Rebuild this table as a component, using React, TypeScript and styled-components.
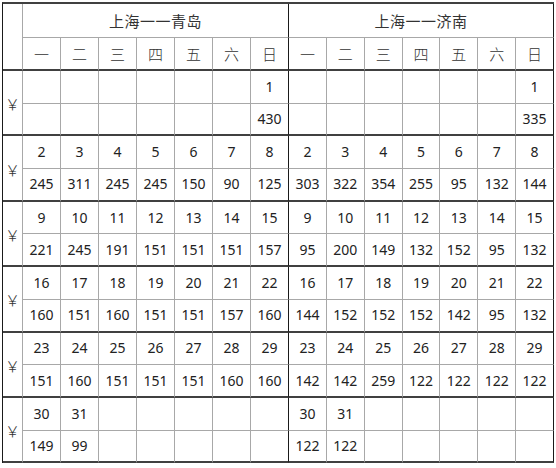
import styled, { createGlobalStyle } from 'styled-components';

const GlobalStyle = createGlobalStyle`
  * { box-sizing: border-box; }
  body {
    margin: 0;
    background: #ffffff;
    font-family: "Noto Sans", "Noto Sans CJK SC", sans-serif;
  }
`;

const DARK_H = '2px solid #404040';
const DARK_V = '1px solid #1a1a1a';
const GRAY = '1px solid #a8a8a8';

const Page = styled.div`
  padding: 2px 0 0 2px;
`;

const Calendar = styled.div`
  display: grid;
  grid-template-columns: 20px repeat(7, 38px) repeat(7, 37.86px);
  grid-template-rows: 34px 33px repeat(12, 32.7px);
  width: max-content;
  border-top: ${DARK_H};
  border-left: ${DARK_V};
`;

const Cell = styled.div<{ $rightDark?: boolean; $bottomDark?: boolean }>`
  display: flex;
  align-items: center;
  justify-content: center;
  border-right: ${p => (p.$rightDark ? DARK_V : GRAY)};
  border-bottom: ${p => (p.$bottomDark ? DARK_H : GRAY)};
  color: #222;
  font-size: 14px;
  line-height: 1;
  white-space: nowrap;
`;

const Corner = styled(Cell)`
  grid-row: span 2;
`;

const RouteTitle = styled(Cell)`
  grid-column: span 7;
  font-family: "Noto Sans CJK SC", sans-serif;
  font-size: 15px;
  color: #333;
  letter-spacing: 0.5px;
`;

const Weekday = styled(Cell)`
  font-family: "Noto Sans CJK SC", sans-serif;
  font-size: 15px;
  font-weight: 300;
  color: #333;
`;

const Yen = styled(Cell)`
  grid-row: span 2;
  font-family: "Noto Sans CJK SC", sans-serif;
  font-size: 15px;
  font-weight: 300;
  color: #333;
  padding-top: 2px;
`;

const DayNum = styled(Cell)`
  font-family: "Noto Sans", sans-serif;
`;

type Week = { days: (number | null)[]; qd: (number | null)[]; jn: (number | null)[] };

const blank = (n: number) => Array<null>(n).fill(null);

const weeks: Week[] = [
  { days: [...blank(6), 1], qd: [...blank(6), 430], jn: [...blank(6), 335] },
  {
    days: [2, 3, 4, 5, 6, 7, 8],
    qd: [245, 311, 245, 245, 150, 90, 125],
    jn: [303, 322, 354, 255, 95, 132, 144],
  },
  {
    days: [9, 10, 11, 12, 13, 14, 15],
    qd: [221, 245, 191, 151, 151, 151, 157],
    jn: [95, 200, 149, 132, 152, 95, 132],
  },
  {
    days: [16, 17, 18, 19, 20, 21, 22],
    qd: [160, 151, 160, 151, 151, 157, 160],
    jn: [144, 152, 152, 152, 142, 95, 132],
  },
  {
    days: [23, 24, 25, 26, 27, 28, 29],
    qd: [151, 160, 151, 151, 151, 160, 160],
    jn: [142, 142, 259, 122, 122, 122, 122],
  },
  { days: [30, 31, ...blank(5)], qd: [149, 99, ...blank(5)], jn: [122, 122, ...blank(5)] },
];

const weekdayNames = ['一', '二', '三', '四', '五', '六', '日'];
const routes = ['上海一一青岛', '上海一一济南'];

export default function App() {
  return (
    <Page>
      <GlobalStyle />
      <Calendar>
        <Corner $bottomDark />
        {routes.map(r => (
          <RouteTitle key={r} $rightDark>
            {r}
          </RouteTitle>
        ))}
        {routes.map(r =>
          weekdayNames.map((w, i) => (
            <Weekday key={r + w} $bottomDark $rightDark={i === 6}>
              {w}
            </Weekday>
          ))
        )}

        {weeks.map((week, wi) => (
          <Row key={wi} week={week} />
        ))}
      </Calendar>
    </Page>
  );
}

function Row({ week }: { week: Week }) {
  const sections = [week.qd, week.jn];
  return (
    <>
      <Yen $bottomDark>￥</Yen>
      {sections.map((_, si) =>
        week.days.map((d, i) => (
          <DayNum key={`d${si}-${i}`} $rightDark={i === 6}>
            {d ?? ''}
          </DayNum>
        ))
      )}
      {sections.map((prices, si) =>
        prices.map((p, i) => (
          <DayNum key={`p${si}-${i}`} $rightDark={i === 6} $bottomDark>
            {p ?? ''}
          </DayNum>
        ))
      )}
    </>
  );
}
